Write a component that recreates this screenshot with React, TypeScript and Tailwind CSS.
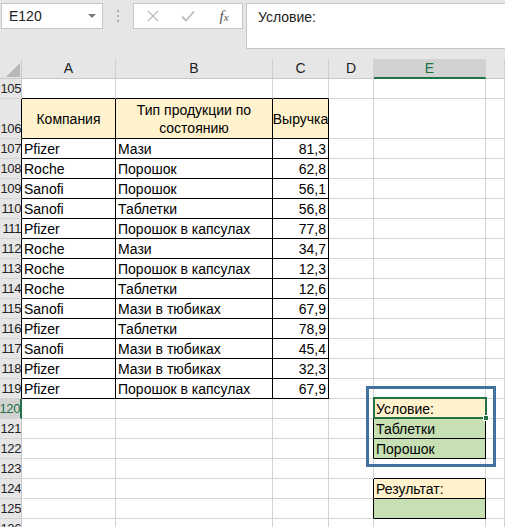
import React from 'react';

type Cell = {
  text?: string;
  align?: 'left' | 'right' | 'center';
  bg?: string;
  b?: string; // border classes
};

const GRID = 'border-[#d4d4d4]';

const rows: { n: number; h: string; cells: Cell[] }[] = [];

const data: [string, string, string][] = [
  ['Pfizer', 'Мази', '81,3'],
  ['Roche', 'Порошок', '62,8'],
  ['Sanofi', 'Порошок', '56,1'],
  ['Sanofi', 'Таблетки', '56,8'],
  ['Pfizer', 'Порошок в капсулах', '77,8'],
  ['Roche', 'Мази', '34,7'],
  ['Roche', 'Порошок в капсулах', '12,3'],
  ['Roche', 'Таблетки', '12,6'],
  ['Sanofi', 'Мази в тюбиках', '67,9'],
  ['Pfizer', 'Таблетки', '78,9'],
  ['Sanofi', 'Мази в тюбиках', '45,4'],
  ['Pfizer', 'Мази в тюбиках', '32,3'],
  ['Pfizer', 'Порошок в капсулах', '67,9'],
];

const blank = (b?: string): Cell => ({ b });
const black = 'border-r-black border-b-black';

// row 105
rows.push({
  n: 105,
  h: 'h-[20px]',
  cells: [blank('border-b-black'), blank('border-b-black'), blank('border-b-black'), blank(), blank(), blank()],
});

// row 106 (table header)
rows.push({
  n: 106,
  h: 'h-[40px]',
  cells: [
    { text: 'Компания', align: 'center', bg: 'bg-[#fff2cc]', b: black },
    { text: 'Тип продукции по состоянию', align: 'center', bg: 'bg-[#fff2cc]', b: black },
    { text: 'Выручка', align: 'center', bg: 'bg-[#fff2cc]', b: black },
    blank(),
    blank(),
    blank(),
  ],
});

data.forEach(([a, b, c], i) => {
  const n = 107 + i;
  rows.push({
    n,
    h: 'h-[20px]',
    cells: [
      { text: a, b: black },
      { text: b, b: black },
      { text: c, align: 'right', b: black },
      blank(),
      n === 119 ? blank('border-b-black') : blank(),
      blank(),
    ],
  });
});

const tail: Record<number, Cell[]> = {
  120: [blank(), blank(), blank(), blank('border-r-black'), { text: 'Условие:', bg: 'bg-[#fff2cc]', b: black }, blank()],
  121: [blank(), blank(), blank(), blank('border-r-black'), { text: 'Таблетки', bg: 'bg-[#c6e0b4]', b: black }, blank()],
  122: [blank(), blank(), blank(), blank('border-r-black'), { text: 'Порошок', bg: 'bg-[#c6e0b4]', b: black }, blank()],
  123: [blank(), blank(), blank(), blank(), blank('border-b-black'), blank()],
  124: [blank(), blank(), blank(), blank('border-r-black'), { text: 'Результат:', bg: 'bg-[#fff2cc]', b: black }, blank()],
  125: [blank(), blank(), blank(), blank('border-r-black'), { bg: 'bg-[#c6e0b4]', b: black }, blank()],
  126: [blank(), blank(), blank(), blank(), blank(), blank()],
};
[120, 121, 122, 123, 124, 125, 126].forEach((n) => rows.push({ n, h: 'h-[20px]', cells: tail[n] }));

const cols = ['A', 'B', 'C', 'D', 'E', ''];

function GridCell({ c }: { c: Cell }) {
  const justify = c.align === 'right' ? 'justify-end pr-[2px]' : c.align === 'center' ? 'justify-center text-center' : 'justify-start pl-[2px]';
  return (
    <div
      className={`flex items-center overflow-hidden whitespace-normal leading-[18px] border-r border-b ${GRID} ${c.bg ?? 'bg-white'} ${c.b ?? ''} ${justify}`}
    >
      {c.text && <span className="whitespace-nowrap">{c.text.length > 20 ? <>Тип продукции по<br />состоянию</> : c.text}</span>}
    </div>
  );
}

export default function App() {
  return (
    <div className="relative w-[505px] h-[527px] overflow-hidden bg-[#e6e6e6] font-['Liberation_Sans',Arial,sans-serif] text-[14px] text-black">
      {/* formula bar */}
      <div className="h-[59px] flex items-start pt-[3px] pl-[1px]">
        <div className="w-[102px] h-[26px] bg-white border border-[#c6c6c6] flex items-center pl-[7px] pr-[6px] justify-between">
          <span className="text-[#222]">E120</span>
          <svg width="8" height="5" viewBox="0 0 8 5"><path d="M0 0h8L4 4z" fill="#7a7a7a" /></svg>
        </div>
        <div className="w-[30px] h-[26px] flex flex-col items-center justify-center gap-[3px]">
          <span className="w-[2px] h-[2px] bg-[#b0b0b0]" />
          <span className="w-[2px] h-[2px] bg-[#b0b0b0]" />
          <span className="w-[2px] h-[2px] bg-[#b0b0b0]" />
        </div>
        <div className="w-[110px] h-[26px] bg-white border border-[#c6c6c6] flex items-center">
          <div className="w-[36px] flex justify-center pl-[2px]">
            <svg width="12" height="12" viewBox="0 0 12 12"><path d="M1 1L11 11M11 1L1 11" stroke="#bdbdbd" strokeWidth="1.4" /></svg>
          </div>
          <div className="w-[36px] flex justify-center">
            <svg width="14" height="12" viewBox="0 0 14 12"><path d="M1 6.5L5 10.5L13 1.5" stroke="#bdbdbd" strokeWidth="1.8" fill="none" /></svg>
          </div>
          <div className="w-[36px] flex justify-center">
            <span className="font-['Liberation_Serif',serif] italic text-[15px] text-[#555] leading-none">f<span className="text-[11px]">x</span></span>
          </div>
        </div>
        <div className="ml-[3px] flex-1 h-[46px] bg-white border border-[#c6c6c6] border-r-0 pl-[11px] pt-[3px]">
          <span className="text-[#222]">Условие:</span>
        </div>
      </div>

      {/* sheet */}
      <div className="relative grid grid-cols-[22px_94px_157px_56px_45px_112px_1fr]">
        {/* column headers */}
        <div className="h-[20px] bg-[#e6e6e6] border-r border-b border-[#c8c8c8] relative">
          <svg className="absolute left-[6px] top-[4px]" width="14" height="14" viewBox="0 0 14 14"><path d="M14 0V14H0z" fill="#b8b8b8" /></svg>
        </div>
        {cols.map((c, i) => (
          <div
            key={i}
            className={`h-[20px] flex items-center justify-center border-r border-[#d0d0d0] ${
              c === 'E' ? 'bg-[#d2d2d2] border-b-2 border-b-[#217346] text-[#217346]' : 'bg-[#e6e6e6] border-b border-b-[#c8c8c8] text-[#222]'
            }`}
          >
            {c}
          </div>
        ))}

        {rows.map((r) => (
          <React.Fragment key={r.n}>
            <div
              className={`${r.h} flex items-end justify-end overflow-hidden text-[13px] tracking-[-0.4px] leading-[19px] border-b border-b-[#d4d4d4] ${
                r.n === 120
                  ? 'bg-[#d2d2d2] text-[#217346] border-r-2 border-r-[#217346]'
                  : `bg-[#e6e6e6] text-[#222] border-r ${r.n >= 106 && r.n <= 119 ? 'border-r-black' : 'border-r-[#c8c8c8]'}`
              }`}
            >
              <span className="whitespace-nowrap">{r.n}</span>
            </div>
            {r.cells.map((c, i) => (
              <GridCell key={i} c={c} />
            ))}
          </React.Fragment>
        ))}

        {/* selected cell E120 */}
        <div className="absolute left-[373px] top-[338px] w-[114px] h-[22px] border-2 border-[#217346] pointer-events-none" />
        <div className="absolute left-[483px] top-[356px] w-[6px] h-[6px] bg-[#217346] border border-white pointer-events-none" />

        {/* blue shape outline */}
        <div className="absolute left-[366px] top-[327px] w-[130px] h-[81px] border-[3px] border-[#41719c] pointer-events-none" />
      </div>
    </div>
  );
}
